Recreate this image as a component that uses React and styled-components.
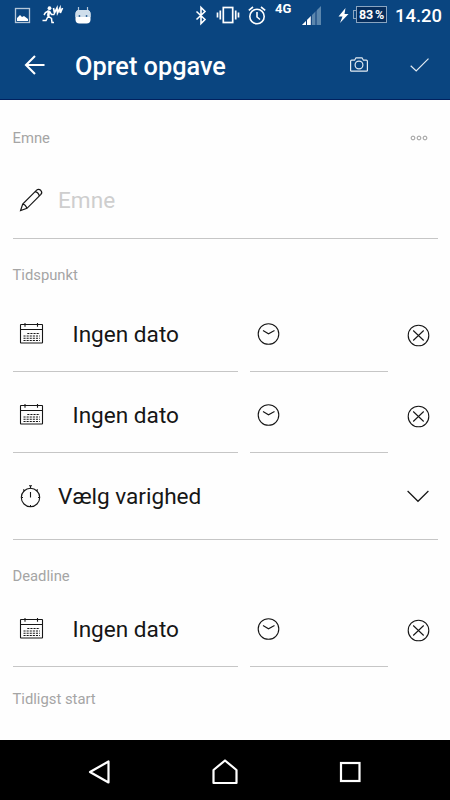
import React from 'react';
import styled, { createGlobalStyle } from 'styled-components';

const Global = createGlobalStyle`
  * { box-sizing: border-box; }
  body { margin: 0; background: #fff; font-family: Roboto, "Liberation Sans", sans-serif; }
  svg { display: block; flex: none; overflow: visible; }
`;

const Screen = styled.div`
  width: 450px;
  height: 800px;
  display: flex;
  flex-direction: column;
  overflow: hidden;
  background: #fefefe;
`;

const StatusBar = styled.div`
  height: 30px;
  background: #0a4580;
  color: #fff;
  display: flex;
  align-items: center;
  justify-content: space-between;
  padding: 0 10px 0 14px;
`;

const StatusIcons = styled.div`
  display: flex;
  align-items: center;
`;

const Spacer = styled.span`
  width: ${(p) => p.$w}px;
  flex: none;
`;

const Network = styled.span`
  font-size: 13px;
  font-weight: 700;
  line-height: 14px;
  width: 18px;
  margin: 0 9px 12px 9px;
`;

const Battery = styled.span`
  display: flex;
  align-items: center;
  margin: 0 8px 1px 2px;
`;

const BatteryTip = styled.span`
  width: 3px;
  height: 9px;
  border: 1px solid #8aa5c1;
  border-right: 0;
`;

const BatteryBody = styled.span`
  display: flex;
  align-items: center;
  justify-content: center;
  width: 31px;
  height: 17px;
  border: 1px solid #8aa5c1;
  background: #062d5c;
  font-size: 12.5px;
  font-weight: 700;
  letter-spacing: -0.2px;
  word-spacing: -1px;
  white-space: nowrap;
`;

const Time = styled.span`
  font-size: 18.4px;
  font-weight: 500;
  line-height: 24px;
  width: 45px;
  margin-top: 2px;
`;

const AppBar = styled.header`
  height: 70px;
  background: #0a4580;
  border-bottom: 1px solid #01215f;
  color: #fff;
  display: flex;
  align-items: center;
  padding: 0 21px 0 24px;
`;

const Title = styled.h1`
  flex: 1;
  margin: 5px 0 0 30px;
  font-size: 25.3px;
  font-weight: 500;
  line-height: 32px;
`;

const Actions = styled.div`
  display: flex;
  align-items: center;
  gap: 42px;
`;

const Form = styled.main`
  flex: 1;
  padding: 0 12.5px;
`;

const SectionLabel = styled.div`
  display: flex;
  align-items: center;
  justify-content: space-between;
  padding: ${(p) => p.$pad};
  font-size: 14.8px;
  line-height: 24px;
  color: #a5a5a5;
`;

const Field = styled.div`
  height: ${(p) => p.$height || 75}px;
  width: ${(p) => (p.$width ? `${p.$width}px` : 'auto')};
  border-bottom: 1px solid #c6c6c6;
  display: flex;
  align-items: center;
  padding: 0 8.5px 0 6.5px;
`;

const FieldText = styled.span`
  flex: 1;
  margin: 2px 0 0 ${(p) => p.$indent || 14}px;
  font-size: 22.6px;
  line-height: 30px;
  color: ${(p) => (p.$placeholder ? '#cecece' : '#161616')};
`;

const DateLine = styled.div`
  display: flex;
  gap: 12.5px;
  margin-top: ${(p) => p.$top || 0}px;
`;

const ClearButton = styled.button`
  flex: 1;
  display: flex;
  align-items: center;
  justify-content: flex-end;
  padding: 1px 8px 0 0;
  border: 0;
  background: none;
`;

const NavBar = styled.nav`
  height: 60px;
  background: #000;
  display: flex;
  align-items: center;
  justify-content: space-between;
  padding: 4px 89px 0 88px;
`;

const Stroke = ({ w, h, color = '#161616', width = 1.2, children }) => (
  <svg width={w} height={h} viewBox={`0 0 ${w} ${h}`} fill="none" stroke={color} strokeWidth={width}>
    {children}
  </svg>
);

const PictureIcon = () => (
  <Stroke w={17} h={17} color="#b5c7d9" width={1.3}>
    <rect x="1.5" y="1.5" width="14" height="14" />
    <path d="M3 14v-3l3-3 2 2 2-1 4 3v2z" fill="#fff" stroke="none" />
  </Stroke>
);

const RunnerIcon = () => (
  <Stroke w={22} h={18} color="#fff" width={1.5}>
    <circle cx="7.500" cy="2.200" r="1.900" fill="#fff" stroke="none" />
    <path d="M7 4.500 6.200 10" strokeWidth="2.600" />
    <path d="M6 10l3.500 2.500.5 4h2M6 10.500l-2 4H.5M6.500 5 3.500 6.500 2 9M7.500 5.500l2 3h2.500" />
    <path d="M11.500 2l1 5L15 2l.5 5L18 2l.300 5L20.500 2" strokeWidth="1.700" />
  </Stroke>
);

const RobotIcon = () => (
  <Stroke w={16} h={18} color="#b5c7d9" width={1.2}>
    <path d="M3.500 1v4M12.500 1v4" />
    <rect x=".5" y="4" width="15" height="13.500" rx="4" fill="#fff" stroke="none" />
    <path d="M.5 11V8a4 4 0 0 1 4-4h7a4 4 0 0 1 4 4v3z" fill="#cfdeeb" stroke="none" />
    <path d="M3.700 10h1.500M10.800 10h1.500" stroke="#0a4580" strokeWidth="1.500" />
  </Stroke>
);

const BluetoothIcon = () => (
  <Stroke w={12} h={19} color="#fff" width={1.6}>
    <path d="M1.500 5.500l8.500 8-4 4V1.500l4 4-8.500 8" />
  </Stroke>
);

const VibrateIcon = () => (
  <Stroke w={24} h={18} color="#fff" width={1.7}>
    <rect x="7.300" y="1.500" width="9.400" height="15" />
    <path d="M4.300 4.500v9M19.700 4.500v9M1.500 6.500v5M22.500 6.500v5" />
  </Stroke>
);

const AlarmIcon = () => (
  <Stroke w={18} h={19} color="#fff" width={1.6}>
    <circle cx="9" cy="10.500" r="7.200" />
    <path d="M9 6v5l3 2.500M.8 4.300 5 1M17.200 4.300 13 1" />
  </Stroke>
);

const SignalIcon = () => (
  <svg width="19" height="19" viewBox="0 0 19 19">
    <path d="M19 0v19H0z" fill="#5b86ad" />
    <path d="M9 10v9H0z" fill="#fff" />
    <path d="M4.500 14v5M9.300 9v10M14 4v15" stroke="#0a3b78" strokeWidth="1" />
  </svg>
);

const BoltIcon = () => (
  <svg width="11" height="15" viewBox="0 0 11 15">
    <path d="M7.500 0 .5 8.500H4.500L2 15l8.500-9H6.500z" fill="#fff" />
  </svg>
);

const BackArrow = () => (
  <Stroke w={21} h={20} color="#fff" width={2.1}>
    <path d="M20.500 10H2M11 1 2 10l9 9" />
  </Stroke>
);

const CameraIcon = () => (
  <Stroke w={18} h={15} color="#e3ebf2" width={1.2}>
    <path d="M1.600 3.200h3L6 .8h6l1.400 2.400h3q1 0 1 1v9.200q0 .8-1 .8H1.600q-1 0-1-.8V4.200q0-1 1-1z" />
    <circle cx="9" cy="8" r="3.900" />
  </Stroke>
);

const CheckIcon = () => (
  <Stroke w={19} h={14} color="#e3ebf2">
    <path d="M.7 7.800 6.200 13 18.500.7" />
  </Stroke>
);

const MoreIcon = () => (
  <Stroke w={18} h={6} color="#9a9a9a" width={1}>
    <circle cx="3" cy="3" r="1.900" />
    <circle cx="9" cy="3" r="1.900" />
    <circle cx="15" cy="3" r="1.900" />
  </Stroke>
);

const PencilIcon = () => (
  <Stroke w={25} h={24}>
    <path d="M1.600 22.500 3.700 16 17.600 2.100q2-1.700 4.100.2 2 2 .2 4.100L8 20.300zM3.700 16q3 .8 4.300 4.300M16 3.700q3.500.7 4.300 4.300" />
  </Stroke>
);

const CalendarIcon = () => (
  <Stroke w={25} h={22} width={1.1}>
    <rect x="1.500" y="1.500" width="22" height="18.500" rx=".5" />
    <path d="M1.500 6.500h22M6 0v3.800M18.500 0v3.800" />
    <path d="M8.300 10.500h12.500M4.500 13h16.300M4.500 15.300h16.300M4.500 17.500h16.300" strokeWidth="1.100" strokeDasharray="2.100 1" />
  </Stroke>
);

const ClockIcon = () => (
  <Stroke w={23} h={23} width={1.1}>
    <circle cx="11.500" cy="11" r="10.300" />
    <path d="M6 7.500l5.500 3.300L17.500 7.500" />
  </Stroke>
);

const ClearIcon = () => (
  <Stroke w={23} h={23} width={1.1}>
    <circle cx="11.500" cy="11.500" r="10.300" />
    <path d="M6.200 6.500l10.500 10M16.700 6.500l-10.500 10" />
  </Stroke>
);

const StopwatchIcon = () => (
  <Stroke w={24} h={24} width={1.1}>
    <circle cx="11.500" cy="13.500" r="9.200" />
    <path d="M11.500 8v5.500M10 1.700h3M11.500 1.500v3M11.500 21v2M2.500 13.500h1.500M19 13.500h1.500M4.300 5.500l1.500 1.500M18.700 5.500l-1.500 1.500" />
  </Stroke>
);

const ChevronIcon = () => (
  <Stroke w={22} h={12}>
    <path d="M.6 1 11 11.300 21.400 1" />
  </Stroke>
);

const DateFields = ({ top }) => (
  <DateLine $top={top}>
    <Field $width={225}>
      <CalendarIcon />
      <FieldText $indent={28.5}>Ingen dato</FieldText>
    </Field>
    <Field $width={138}>
      <ClockIcon />
    </Field>
    <ClearButton aria-label="Ryd">
      <ClearIcon />
    </ClearButton>
  </DateLine>
);

export default function App() {
  return (
    <>
      <Global />
      <Screen>
        <StatusBar>
          <StatusIcons>
            <PictureIcon />
            <Spacer $w={11} />
            <RunnerIcon />
            <Spacer $w={11} />
            <RobotIcon />
          </StatusIcons>
          <StatusIcons>
            <BluetoothIcon />
            <Spacer $w={9} />
            <VibrateIcon />
            <Spacer $w={8} />
            <AlarmIcon />
            <Network>4G</Network>
            <SignalIcon />
            <Spacer $w={17} />
            <BoltIcon />
            <Spacer $w={2} />
            <Battery>
              <BatteryTip />
              <BatteryBody>83 %</BatteryBody>
            </Battery>
            <Time>14.20</Time>
          </StatusIcons>
        </StatusBar>
        <AppBar>
          <BackArrow />
          <Title>Opret opgave</Title>
          <Actions>
            <CameraIcon />
            <CheckIcon />
          </Actions>
        </AppBar>
        <Form>
          <SectionLabel $pad="26px 10px 12px 0">
            Emne
            <MoreIcon />
          </SectionLabel>
          <Field $height={77}>
            <PencilIcon />
            <FieldText $placeholder>Emne</FieldText>
          </Field>
          <SectionLabel $pad="24px 0 10px">Tidspunkt</SectionLabel>
          <DateFields />
          <DateFields top={6} />
          <Field $height={87}>
            <StopwatchIcon />
            <FieldText $indent={15}>Vælg varighed</FieldText>
            <ChevronIcon />
          </Field>
          <SectionLabel $pad="24px 0 4px">Deadline</SectionLabel>
          <DateFields />
          <SectionLabel $pad="20px 0 0">Tidligst start</SectionLabel>
        </Form>
        <NavBar>
          <Stroke w={23} h={24} color="#fff" width={2.2}>
            <path d="M2 12 20.500 1.500v21z" strokeLinejoin="round" />
          </Stroke>
          <Stroke w={26} h={26} color="#fff" width={2.2}>
            <path d="M1.500 24V11L13 1.500l11.500 9.500V24z" strokeLinejoin="round" />
          </Stroke>
          <Stroke w={22} h={22} color="#fff" width={2.2}>
            <rect x="2" y="2" width="18.500" height="18" />
          </Stroke>
        </NavBar>
      </Screen>
    </>
  );
}
